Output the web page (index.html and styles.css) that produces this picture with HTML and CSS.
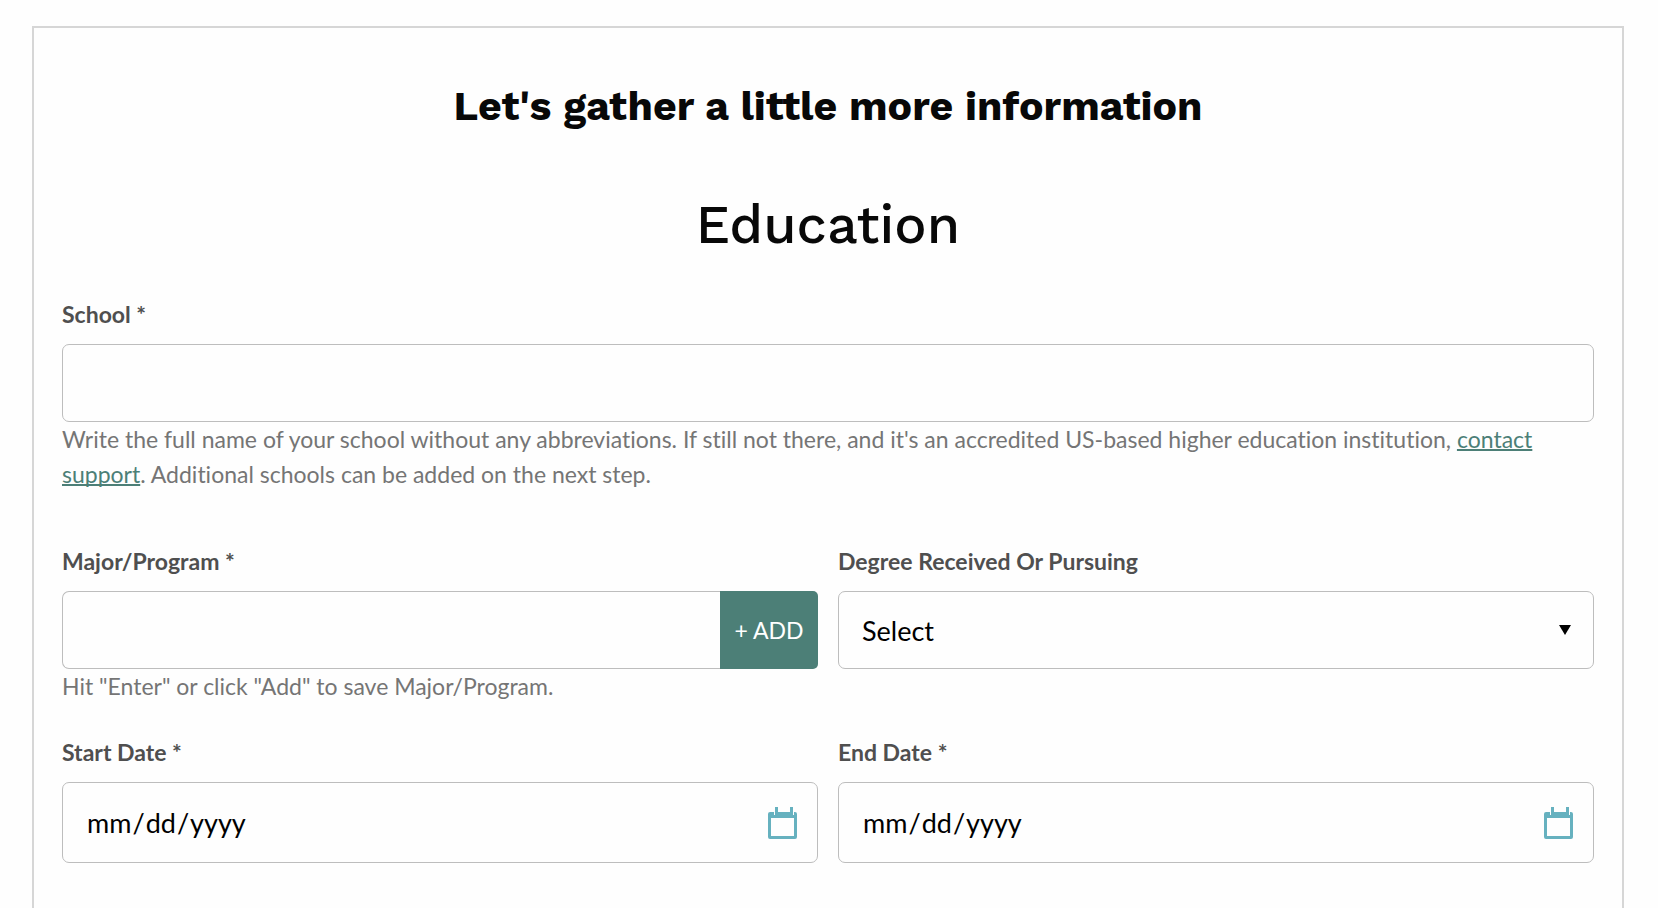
FILE: index.html
```
<!DOCTYPE html>
<html lang="en-US">
<head>
    <meta charset="UTF-8">
    <meta name="viewport" content="width=device-width, initial-scale=1.0">
    <title>Education</title>
    <link rel="stylesheet" href="styles.css">
</head>
<body>
    <main class="panel">
        <h1>Let's gather a little more information</h1>
        <h2>Education</h2>
        <form>
            <div class="field">
                <label for="school">School *</label>
                <input type="text" id="school" required>
                <p class="help">Write the full name of your school without any abbreviations. If still not there, and it's an accredited US-based higher education institution, <a href="#">contact support</a>. Additional schools can be added on the next step.</p>
            </div>
            <div class="row row-major">
                <div class="field">
                    <label for="major">Major/Program *</label>
                    <div class="add-group">
                        <input type="text" id="major">
                        <button type="button">+ ADD</button>
                    </div>
                    <p class="help">Hit "Enter" or click "Add" to save Major/Program.</p>
                </div>
                <div class="field">
                    <label for="degree">Degree Received Or Pursuing</label>
                    <div class="control">
                        <select id="degree">
                            <option>Select</option>
                        </select>
                        <svg class="arrow" viewBox="0 0 12 10"><path d="M0 0h12L6 10z"/></svg>
                    </div>
                </div>
            </div>
            <div class="row row-dates">
                <div class="field">
                    <label for="startDate">Start Date *</label>
                    <div class="control">
                        <input type="date" id="startDate" required>
                        <svg class="calendar" viewBox="0 0 29 32"><path fill-rule="evenodd" d="M2 5H6V8H7V0H10V5H22V0H25V8H26V5H27Q29 5 29 7V30Q29 32 27 32H2Q0 32 0 30V7Q0 5 2 5ZM3 11V29H26V11Z"/></svg>
                    </div>
                </div>
                <div class="field">
                    <label for="endDate">End Date *</label>
                    <div class="control">
                        <input type="date" id="endDate" required>
                        <svg class="calendar" viewBox="0 0 29 32"><path fill-rule="evenodd" d="M2 5H6V8H7V0H10V5H22V0H25V8H26V5H27Q29 5 29 7V30Q29 32 27 32H2Q0 32 0 30V7Q0 5 2 5ZM3 11V29H26V11Z"/></svg>
                    </div>
                </div>
            </div>
        </form>
    </main>
</body>
</html>
```
FILE: styles.css
```
* {
    box-sizing: border-box;
}
:root {
    --green: #4c7f77;
    --border: #bdbdbd;
}
body {
    margin: 0;
    padding: 26px 34px 0 32px;
    background: #fefefe;
    font-family: Lato, sans-serif;
    font-size: 23px;
    line-height: 35px;
    font-variant-ligatures: none;
}
.panel {
    min-height: calc(100vh - 26px);
    border: 2px solid #d6d6d6;
    border-bottom: none;
    padding: 53px 28px 40px;
}
h1, h2 {
    margin: 0;
    font-family: "Work Sans", Inter, sans-serif;
    font-variant-ligatures: normal;
    text-align: center;
    color: #080808;
}
h1 {
    font-size: 41px;
    font-weight: 700;
    line-height: 50px;
}
h2 {
    margin: 62px 0 40px;
    font-size: 54px;
    font-weight: 500;
    line-height: 64px;
}
.field {
    display: flex;
    flex-direction: column;
}
.row {
    display: grid;
    grid-template-columns: 1fr 1fr;
    gap: 20px;
}
.row-major {
    margin-top: 52px;
}
.row-dates {
    margin-top: 31px;
}
label {
    margin-bottom: 12px;
    font-weight: 700;
    color: #4f4f4f;
}
input, select {
    width: 100%;
    height: 78px;
    margin: 0;
    padding: 0 23px;
    border: 1px solid var(--border);
    border-radius: 7px;
    background: #fefefe;
    font-family: inherit;
    font-size: 27px;
    color: #000;
}
select {
    appearance: none;
}
input[type="date"] {
    height: 81px;
}
input[type="date"]::-webkit-calendar-picker-indicator {
    width: 30px;
    opacity: 0;
}
.help {
    margin: 0;
    color: #757575;
}
.help a {
    color: var(--green);
    text-decoration-thickness: 2px;
    text-decoration-skip-ink: none;
}
.add-group {
    display: flex;
}
.add-group input {
    flex: 1;
    min-width: 0;
    border-right: none;
    border-radius: 7px 0 0 7px;
}
.add-group button {
    width: 98px;
    padding: 0;
    border: none;
    border-radius: 0 5px 5px 0;
    background: var(--green);
    font-family: inherit;
    font-size: 23px;
    color: #fff;
}
.control {
    position: relative;
    display: flex;
}
.arrow, .calendar {
    position: absolute;
    pointer-events: none;
}
.arrow {
    right: 23px;
    top: 34px;
    width: 12px;
    height: 10px;
}
.calendar {
    right: 21px;
    top: 25px;
    width: 29px;
    height: 32px;
    fill: #66b1bf;
}
```
